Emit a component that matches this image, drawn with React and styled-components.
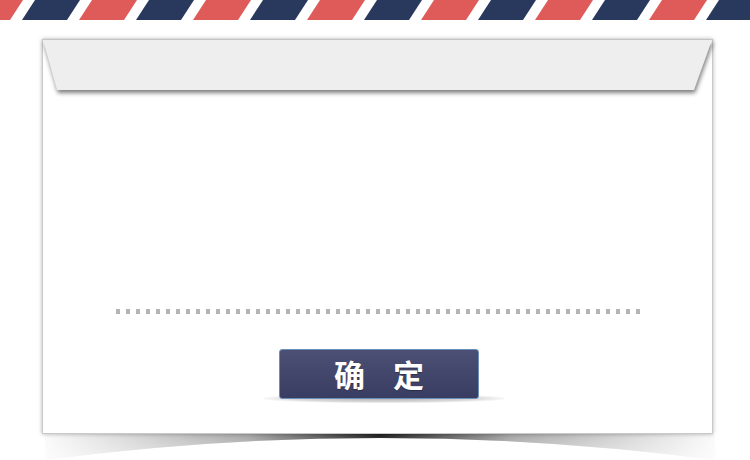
import React from "react";
import styled, { createGlobalStyle } from "styled-components";

const GlobalStyle = createGlobalStyle`
  html, body {
    margin: 0;
    padding: 0;
    background: #ffffff;
    overflow: hidden;
  }
  body {
    font-family: "Noto Sans CJK SC", "Noto Sans", sans-serif;
  }
`;

const STRIPE_W = 45;
const PERIOD = 114;
const SKEW = 13;

const stripes = [];
for (let k = -1; k < 8; k++) {
  stripes.push({ x: -22 + PERIOD * k, color: "#df5b5a" });
  stripes.push({ x: 35 + PERIOD * k, color: "#29395d" });
}

const AirmailBand = () => (
  <Band>
    <svg width="750" height="20" viewBox="0 0 750 20">
      {stripes.map((s, i) => (
        <polygon
          key={i}
          fill={s.color}
          points={`${s.x},0 ${s.x + STRIPE_W},0 ${s.x + STRIPE_W - SKEW},20 ${s.x - SKEW},20`}
        />
      ))}
    </svg>
  </Band>
);

const CurvedShadow = () => (
  <ShadowWrap>
    <svg width="680" height="26" viewBox="0 0 680 26">
      <defs>
        <linearGradient id="shadeX" x1="0" x2="1" y1="0" y2="0">
          <stop offset="0" stopColor="#fafafa" />
          <stop offset="0.3" stopColor="#a8a8a8" />
          <stop offset="0.5" stopColor="#1e1e1e" />
          <stop offset="0.7" stopColor="#a8a8a8" />
          <stop offset="1" stopColor="#fafafa" />
        </linearGradient>
        <linearGradient id="shadeY" x1="0" x2="0" y1="0" y2="1">
          <stop offset="0" stopColor="#ffffff" stopOpacity="0" />
          <stop offset="1" stopColor="#ffffff" stopOpacity="0.5" />
        </linearGradient>
      </defs>
      <path d="M3,0 L673,0 L673,26 Q338,-18 3,26 Z" fill="url(#shadeX)" />
      <path d="M3,0 L673,0 L673,26 Q338,-18 3,26 Z" fill="url(#shadeY)" />
    </svg>
  </ShadowWrap>
);

const App = () => {
  return (
    <>
      <GlobalStyle />
      <Page>
        <AirmailBand />
        <Stage>
          <Card>
            <HeaderShade>
              <HeaderFlap />
            </HeaderShade>
            <DottedRule />
            <ConfirmButton type="button">确定</ConfirmButton>
          </Card>
          <CurvedShadow />
        </Stage>
      </Page>
    </>
  );
};

const Page = styled.div`
  width: 750px;
  height: 460px;
  display: flex;
  flex-direction: column;
`;

const Band = styled.div`
  height: 20px;
  line-height: 0;
  svg {
    display: block;
  }
`;

const Stage = styled.div`
  margin-top: 19px;
  padding-left: 42px;
  display: flex;
  flex-direction: column;
`;

const Card = styled.div`
  position: relative;
  z-index: 0;
  width: 669px;
  height: 393px;
  border: 1px solid #c9c9c9;
  background: #ffffff;
  box-shadow: 0 0 4px rgba(0, 0, 0, 0.3);
  display: flex;
  flex-direction: column;
  align-items: center;
`;

const HeaderShade = styled.div`
  align-self: stretch;
  height: 50px;
  filter: drop-shadow(1px 3px 2px rgba(0, 0, 0, 0.5));
`;

const HeaderFlap = styled.div`
  height: 100%;
  background: #eeeeee;
  clip-path: polygon(0 0, 100% 0, calc(100% - 18px) 100%, 14px 100%);
`;

const DottedRule = styled.div`
  margin-top: 219px;
  width: 524px;
  height: 5px;
  background: repeating-linear-gradient(
    to right,
    #b4b4b4 0 4px,
    transparent 4px 10px
  );
`;

const ConfirmButton = styled.button`
  position: relative;
  margin-top: 35px;
  margin-left: 3px;
  width: 200px;
  height: 50px;
  padding: 0 0 0 28px;
  border: 1px solid #6a8fb8;
  border-radius: 3px;
  background: linear-gradient(to bottom, #4d5075, #3a3d62);
  color: #ffffff;
  font-family: "Noto Sans CJK SC", "Noto Sans", sans-serif;
  font-size: 31px;
  font-weight: 700;
  letter-spacing: 28px;
  line-height: 46px;
  text-shadow: 0 1px 1px rgba(0, 0, 0, 0.3);
  cursor: pointer;

  &::after {
    content: "";
    position: absolute;
    left: -16px;
    right: -26px;
    bottom: -5px;
    height: 9px;
    background: radial-gradient(
      ellipse at center,
      rgba(0, 0, 0, 0.3) 0%,
      rgba(0, 0, 0, 0.14) 55%,
      rgba(0, 0, 0, 0) 75%
    );
    z-index: -1;
  }
`;

const ShadowWrap = styled.div`
  height: 26px;
  line-height: 0;
  svg {
    display: block;
  }
`;

export default App;
